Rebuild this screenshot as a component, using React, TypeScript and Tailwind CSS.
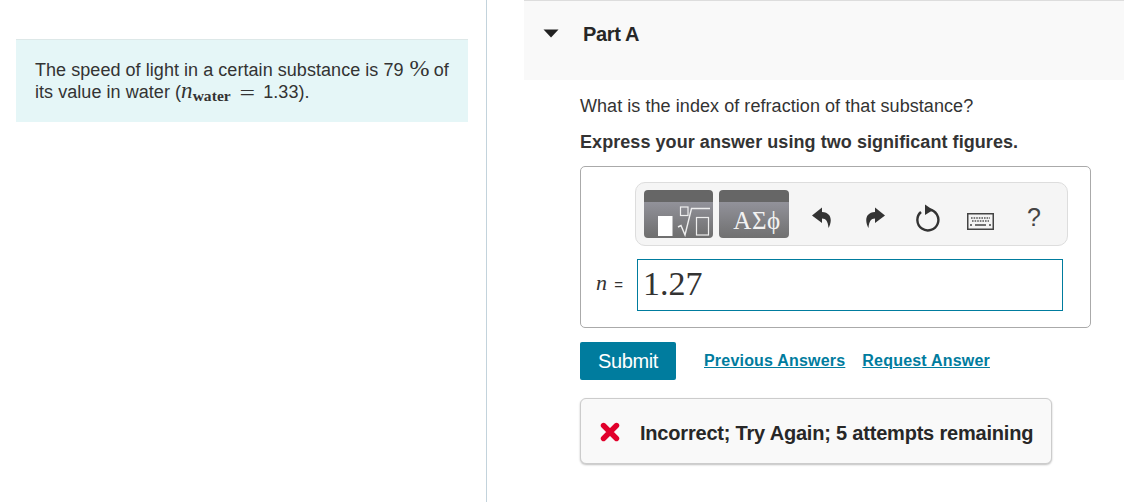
import React from 'react';

const sans = '[font-family:"Liberation_Sans",Arial,sans-serif]';

const TemplateIcon = () => (
  <svg width="69" height="36" viewBox="0 0 69 36" className="block">
    <rect x="14" y="14" width="14.5" height="20" fill="#fff" />
    <rect x="36.5" y="5" width="7.5" height="8.5" fill="none" stroke="#eee" strokeWidth="1.2" />
    <path d="M34 25 L37 23.5 L41 33 L47.5 6.5 H66" fill="none" stroke="#eee" strokeWidth="1.4" />
    <rect x="52.5" y="15.5" width="12" height="17.5" fill="none" stroke="#eee" strokeWidth="1.2" />
  </svg>
);

const UndoIcon = () => (
  <svg width="20" height="22" viewBox="0 0 20 22" className="block">
    <path d="M10 0.5 L0 8.5 L10 16 V11.5 C14 11.5 16 14.5 16.5 21 C20 15 20.5 5.5 10 5 Z" fill="#333" />
  </svg>
);

const RedoIcon = () => (
  <svg width="20" height="22" viewBox="0 0 20 22" className="block">
    <path d="M10 0.5 L20 8.5 L10 16 V11.5 C6 11.5 4 14.5 3.5 21 C0 15 -0.5 5.5 10 5 Z" fill="#333" />
  </svg>
);

const ResetIcon = () => (
  <svg width="26" height="28" viewBox="0 0 26 28" className="block">
    <path d="M14 5.5 A10.5 10.5 0 1 1 6 8" fill="none" stroke="#333" strokeWidth="2.4" />
    <path d="M10 0.5 L18 6 L10 11 Z" fill="#333" />
  </svg>
);

const KeyboardIcon = () => (
  <svg width="27" height="17" viewBox="0 0 27 17" className="block">
    <rect x="0.75" y="0.75" width="25.5" height="15.5" fill="#f4f4f4" stroke="#444" strokeWidth="1.5" />
    <path d="M4 5 H23" stroke="#555" strokeWidth="1.7" strokeDasharray="1.6 1" />
    <path d="M5 8 H22" stroke="#555" strokeWidth="1.7" strokeDasharray="1.6 1" />
    <path d="M3 12 H5 M8 12 H19 M22 12 H24" stroke="#444" strokeWidth="1.6" />
  </svg>
);

const CrossIcon = () => (
  <svg width="20" height="20" viewBox="0 0 20 20" className="block">
    <path d="M3.5 3.5 L16.5 16.5 M16.5 3.5 L3.5 16.5" stroke="#e1002b" strokeWidth="5.4" strokeLinecap="round" />
  </svg>
);

const PaletteButton = ({ children }: { children: React.ReactNode }) => (
  <div className="h-12 rounded-[4px] overflow-hidden flex flex-col">
    <div className="h-3 bg-[#666666] shrink-0" />
    <div className="flex-1 bg-gradient-to-b from-[#92929a] to-[#6e6e6e]">{children}</div>
  </div>
);

export default function App() {
  return (
    <div className={`flex h-[502px] w-[1124px] overflow-hidden bg-white text-[#333333] ${sans}`}>
      {/* Intro column */}
      <div className="w-[487px] shrink-0 border-r border-[#c3d3dc] pt-[39px] pl-4 pr-[18px]">
        <div className="h-[83px] bg-[#e5f6f7] border-t border-[#dde8e8] pt-[17px] pl-[19px] text-[18px] leading-[22px] tracking-[0.05px]">
          <div className="flex items-baseline whitespace-nowrap h-[22px]">
            The speed of light in a certain substance is 79
            <span className="ml-[6px] mr-[4px] text-[24px] leading-[22px] [font-family:'Liberation_Serif',serif]">%</span>
            of
          </div>
          <div className="flex items-baseline whitespace-nowrap h-[22px] mt-[1px]">
            its value in water (
            <span className="text-[23px] italic leading-[22px] [font-family:'Liberation_Serif',serif]">n</span>
            <span className="relative top-[3px] text-[15.5px] font-bold leading-[16px] [font-family:'Liberation_Serif',serif]">water</span>
            <span className="relative top-[2px] ml-[10px] mr-[10px] scale-x-125 text-[22px] leading-[22px] [font-family:'Liberation_Serif',serif]">=</span>
            1.33).
          </div>
        </div>
      </div>

      {/* Question column */}
      <div className="flex-1 min-w-0 pl-[37px]">
        <div className="h-20 bg-[#f9f9f9] border-t border-[#dddddd] flex items-start pt-[21px]">
          <svg width="16" height="9" viewBox="0 0 16 9" className="ml-[19px] mt-[7px] shrink-0">
            <path d="M0.5 0.5 H15.5 L8 8.5 Z" fill="#222222" />
          </svg>
          <div className="ml-6 text-[20px] leading-[24px] font-bold text-[#272727] tracking-[-0.35px]">Part A</div>
        </div>

        <div className="pl-14 pr-[33px]">
          <p className="mt-[15px] text-[18px] leading-[22px] tracking-[0.06px]">What is the index of refraction of that substance?</p>
          <p className="mt-[14px] text-[18px] leading-[22px] font-bold tracking-[0.06px]">Express your answer using two significant figures.</p>

          {/* Answer box */}
          <div className="mt-[13px] h-[162px] border border-[#aaaaaa] rounded-[5px] pt-[15px] pl-[54px] pr-[22px]">
            <div className="h-[64px] bg-[#f5f5f5] border border-[#dddddd] rounded-[10px] flex items-center pl-2">
              <div className="w-[69px]">
                <PaletteButton><TemplateIcon /></PaletteButton>
              </div>
              <div className="w-[70px] ml-[6px]">
                <PaletteButton>
                  <div className="pl-[6px] text-center text-[#f2f2f2] text-[25px] leading-[38px] tracking-[0.5px] [font-family:'Liberation_Serif',serif]">ΑΣϕ</div>
                </PaletteButton>
              </div>
              <div className="ml-[23px] mt-2"><UndoIcon /></div>
              <div className="ml-[33px] mt-2"><RedoIcon /></div>
              <div className="ml-[30px] mt-[7px]"><ResetIcon /></div>
              <div className="ml-[26px] mt-[14px]"><KeyboardIcon /></div>
              <div className="ml-[33px] mt-[6px] text-[25px] leading-[28px] text-[#444444]">?</div>
            </div>

            <div className="flex items-center mt-[13px] -ml-[40px] mr-[5px]">
              <span className="w-[42px] shrink-0 text-right pr-[14px] text-[15px] whitespace-nowrap">
                <i className="mr-[3px] text-[22px] leading-[20px] [font-family:'Liberation_Serif',serif]">n</i> =
              </span>
              <div className="flex-1 h-[52px] border border-[#007c9e] pl-[5px] text-[34px] leading-[48px] [font-family:'Liberation_Serif',serif]">1.27</div>
            </div>
          </div>

          {/* Actions */}
          <div className="flex items-center mt-[14px]">
            <button className="w-[96px] h-[38px] bg-[#007c9e] rounded-[2px] text-white text-[20px] tracking-[-0.4px]">Submit</button>
            <a href="#" className="ml-7 text-[16px] font-bold text-[#007c9e] underline tracking-[0.2px]">Previous Answers</a>
            <a href="#" className="ml-[17px] text-[16px] font-bold text-[#007c9e] underline tracking-[0.2px]">Request Answer</a>
          </div>

          {/* Feedback */}
          <div className="mt-[18px] w-[472px] h-[66px] bg-[#f9f9f9] border border-[#cccccc] rounded-[6px] shadow-[0_1px_2px_rgba(0,0,0,0.25)] flex items-center pl-[19px]">
            <div className="mt-[1px]"><CrossIcon /></div>
            <span className="ml-[20px] mt-1 text-[20px] font-bold text-[#272727] whitespace-nowrap tracking-[-0.2px]">Incorrect; Try Again; 5 attempts remaining</span>
          </div>
        </div>
      </div>
    </div>
  );
}
